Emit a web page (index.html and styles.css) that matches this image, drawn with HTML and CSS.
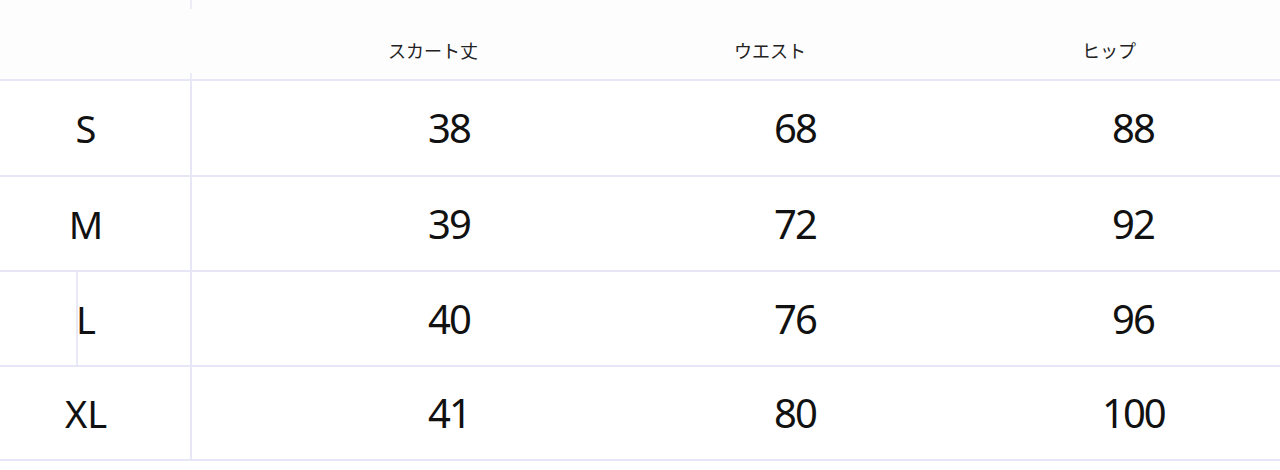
FILE: index.html
```html
<!DOCTYPE html>
<html lang="ja">
<head>
<meta charset="utf-8">
<title>サイズ表</title>
<link rel="stylesheet" href="styles.css">
</head>
<body>
<div class="table">
  <div class="row head">
    <div class="cell size"></div>
    <div class="cell hd">スカート丈</div>
    <div class="cell hd">ウエスト</div>
    <div class="cell hd hd-hip">ヒップ</div>
  </div>
  <div class="row r1">
    <div class="cell size">S</div>
    <div class="cell num">38</div>
    <div class="cell num">68</div>
    <div class="cell num">88</div>
  </div>
  <div class="row r2">
    <div class="cell size">M</div>
    <div class="cell num">39</div>
    <div class="cell num">72</div>
    <div class="cell num">92</div>
  </div>
  <div class="row r3">
    <div class="cell size size-l">L</div>
    <div class="cell num">40</div>
    <div class="cell num">76</div>
    <div class="cell num">96</div>
  </div>
  <div class="row r4">
    <div class="cell size">XL</div>
    <div class="cell num">41</div>
    <div class="cell num">80</div>
    <div class="cell num num-wide">100</div>
  </div>
</div>
</body>
</html>
```
FILE: styles.css
```css
html, body {
  margin: 0;
  padding: 0;
  background: #ffffff;
}
body {
  width: 1280px;
  height: 470px;
  overflow: hidden;
  font-family: "Noto Sans", "Noto Sans CJK JP", sans-serif;
  color: #111;
}
.table {
  display: flex;
  flex-direction: column;
}
.row {
  display: grid;
  grid-template-columns: 192px 346px 338px 1fr;
  border-bottom: 2px solid #e6e6f6;
}
.head { height: 79px; background: #fdfdfd; }
.r1 { height: 94px; }
.r2 { height: 93px; }
.r3 { height: 93px; }
.r4 { height: 92px; }
.cell {
  display: flex;
  align-items: center;
}
.size {
  justify-content: center;
  padding-right: 18px;
  border-right: 2px solid #e6e6f6;
  font-size: 38px;
  line-height: 1;
}
.head .size {
  border-right-color: transparent;
  background: linear-gradient(#ececf7, #ececf7) no-repeat 190px 0 / 2px 9px,
              linear-gradient(#ececf7, #ececf7) no-repeat 190px 73px / 2px 6px;
}
.size-l {
  background: linear-gradient(#e8e8f6, #e8e8f6) no-repeat 76px 0 / 2px 100%;
}
.hd {
  padding-left: 196px;
  padding-top: 37px;
  align-items: flex-start;
  font-family: "Noto Sans CJK JP", sans-serif;
  font-size: 18px;
  color: #222;
}
.hd-hip {
  padding-left: 206px;
}
.num {
  padding-left: 236px;
  font-size: 40px;
  line-height: 1;
  letter-spacing: -2px;
}
.num-wide {
  padding-left: 226px;
}
```
